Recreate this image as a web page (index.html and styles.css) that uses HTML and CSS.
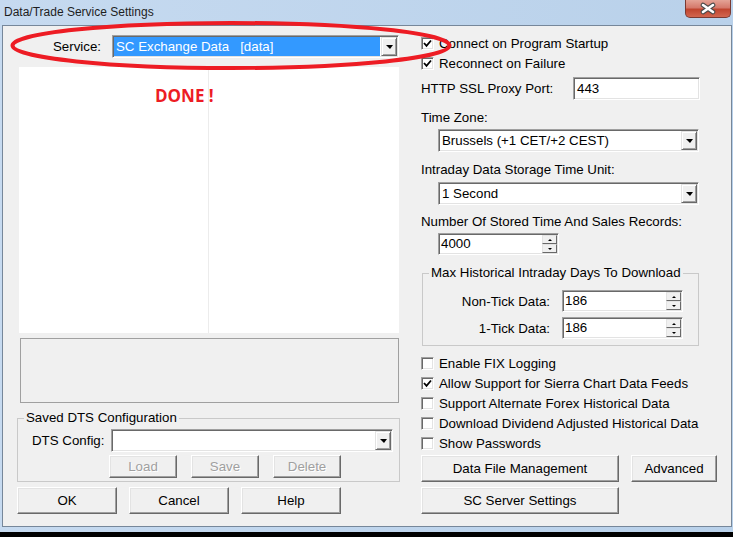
FILE: index.html
```html
<!DOCTYPE html>
<html lang="en">
<head>
    <meta charset="UTF-8">
    <title>Data/Trade Service Settings</title>
    <link rel="stylesheet" href="styles.css">
</head>
<body>
    <div class="window">
        <div class="titlebar">
            <span class="title">Data/Trade Service Settings</span>
            <div class="close-btn">
                <svg width="18" height="13" viewBox="0 0 18 13">
                    <path d="M4 3 L14 10 M14 3 L4 10" stroke="#4a4a4a" stroke-width="4.6" stroke-linecap="round"/>
                    <path d="M4 3 L14 10 M14 3 L4 10" stroke="#fff" stroke-width="2.6" stroke-linecap="round"/>
                </svg>
            </div>
        </div>

        <div class="client">
            <!-- left side: service + list + saved configs -->
            <div class="col-left">
                <div class="service-row">
                    <span class="service-label">Service:</span>
                    <div class="combo service-combo">
                        <span class="combo-text selected">SC Exchange Data&nbsp;&nbsp;&nbsp;[data]</span>
                        <span class="combo-btn"><i class="arrow"></i></span>
                    </div>
                </div>

                <div class="list">
                    <div class="list-col first"><span class="done">DONE !</span></div>
                    <div class="list-col"></div>
                </div>

                <div class="status-box"></div>

                <fieldset class="group dts-group">
                    <legend>Saved DTS Configuration</legend>
                    <div class="dts-row">
                        <span class="dts-label">DTS Config:</span>
                        <div class="combo dts-combo">
                            <span class="combo-text"></span>
                            <span class="combo-btn"><i class="arrow"></i></span>
                        </div>
                    </div>
                    <div class="dts-buttons">
                        <button class="btn small-btn" disabled>Load</button>
                        <button class="btn small-btn" disabled>Save</button>
                        <button class="btn small-btn" disabled>Delete</button>
                    </div>
                </fieldset>

                <div class="dialog-buttons">
                    <button class="btn dlg-btn">OK</button>
                    <button class="btn dlg-btn">Cancel</button>
                    <button class="btn dlg-btn">Help</button>
                </div>
            </div>

            <!-- right side: options -->
            <div class="col-right">
                <div class="check-row">
                    <span class="cb checked"><svg width="9" height="9" viewBox="0 0 9 9"><path d="M1 4 L3.5 6.8 L8 1.5" fill="none" stroke="#000" stroke-width="1.8"/></svg></span>
                    <span>Connect on Program Startup</span>
                </div>
                <div class="check-row">
                    <span class="cb checked"><svg width="9" height="9" viewBox="0 0 9 9"><path d="M1 4 L3.5 6.8 L8 1.5" fill="none" stroke="#000" stroke-width="1.8"/></svg></span>
                    <span>Reconnect on Failure</span>
                </div>

                <div class="proxy-row">
                    <span class="proxy-label">HTTP SSL Proxy Port:</span>
                    <div class="field proxy-field">443</div>
                </div>

                <div class="field-label tz-label">Time Zone:</div>
                <div class="combo wide-combo tz-combo">
                    <span class="combo-text">Brussels (+1 CET/+2 CEST)</span>
                    <span class="combo-btn"><i class="arrow"></i></span>
                </div>

                <div class="field-label unit-label">Intraday Data Storage Time Unit:</div>
                <div class="combo wide-combo unit-combo">
                    <span class="combo-text">1 Second</span>
                    <span class="combo-btn"><i class="arrow"></i></span>
                </div>

                <div class="field-label records-label">Number Of Stored Time And Sales Records:</div>
                <div class="spin records-spin">
                    <span class="spin-text">4000</span>
                    <span class="spin-btns"><span class="spin-up"><i class="tri-up"></i></span><span class="spin-down"><i class="tri-down"></i></span></span>
                </div>

                <fieldset class="group days-group">
                    <legend>Max Historical Intraday Days To Download</legend>
                    <div class="days-row first-days">
                        <span class="days-label">Non-Tick Data:</span>
                        <div class="spin days-spin">
                            <span class="spin-text">186</span>
                            <span class="spin-btns"><span class="spin-up"><i class="tri-up"></i></span><span class="spin-down"><i class="tri-down"></i></span></span>
                        </div>
                    </div>
                    <div class="days-row">
                        <span class="days-label">1-Tick Data:</span>
                        <div class="spin days-spin">
                            <span class="spin-text">186</span>
                            <span class="spin-btns"><span class="spin-up"><i class="tri-up"></i></span><span class="spin-down"><i class="tri-down"></i></span></span>
                        </div>
                    </div>
                </fieldset>

                <div class="options">
                    <div class="check-row"><span class="cb"></span><span>Enable FIX Logging</span></div>
                    <div class="check-row">
                        <span class="cb checked"><svg width="9" height="9" viewBox="0 0 9 9"><path d="M1 4 L3.5 6.8 L8 1.5" fill="none" stroke="#000" stroke-width="1.8"/></svg></span>
                        <span>Allow Support for Sierra Chart Data Feeds</span>
                    </div>
                    <div class="check-row"><span class="cb"></span><span>Support Alternate Forex Historical Data</span></div>
                    <div class="check-row"><span class="cb"></span><span>Download Dividend Adjusted Historical Data</span></div>
                    <div class="check-row"><span class="cb"></span><span>Show Passwords</span></div>
                </div>

                <div class="action-row">
                    <button class="btn big-btn">Data File Management</button>
                    <button class="btn adv-btn">Advanced</button>
                </div>
                <div class="action-row second">
                    <button class="btn big-btn">SC Server Settings</button>
                </div>
            </div>
        </div>

        <!-- red marker drawn over the service selector -->
        <svg class="marker" width="733" height="537" viewBox="0 0 733 537">
            <ellipse cx="231" cy="45.5" rx="218.5" ry="22.5" fill="none" stroke="#ed1c24" stroke-width="4"/>
        </svg>
    </div>
</body>
</html>
```

FILE: styles.css
```css
* {
    box-sizing: border-box;
}

body {
    margin: 0;
    background: #000;
    font-family: 'Liberation Sans', Arial, sans-serif;
    font-size: 13.3px;
    color: #000;
}

.window {
    position: relative;
    width: 733px;
    height: 532px;
    background: linear-gradient(to right, #c6daf0, #b9d1ea);
    padding-left: 2px;
}

.titlebar {
    height: 25px;
    display: flex;
    justify-content: space-between;
    align-items: flex-start;
}

.title {
    font-size: 12px;
    line-height: 25px;
    padding-left: 2px;
    color: #1e1e1e;
}

.close-btn {
    width: 46px;
    height: 18px;
    margin-right: 2px;
    border: 1px solid #7a3a32;
    border-top: none;
    border-radius: 0 0 5px 5px;
    background: linear-gradient(#e4a396 0%, #d5796b 45%, #c0452f 55%, #d2664f 100%);
    display: flex;
    justify-content: center;
    align-items: center;
}

.client {
    width: 730px;
    height: 502px;
    background: #f0f0f0;
    border: 1px solid #76879a;
    display: flex;
    padding-left: 14px;
    gap: 21px;
}

/* ---------- shared controls ---------- */

.combo,
.field,
.spin {
    display: flex;
    height: 23px;
    background: #fff;
    border: 1px solid;
    border-color: #a0a0a0 #fff #fff #a0a0a0;
    box-shadow: inset 1px 1px #696969, inset -1px -1px #e3e3e3;
    padding: 1px;
}

.combo-text {
    flex: 1;
    line-height: 19px;
    padding-left: 2px;
    white-space: nowrap;
    overflow: hidden;
}

.combo-text.selected {
    background: #3399ff;
    color: #fff;
    margin-right: 1px;
}

.combo-btn {
    width: 16px;
    background: #f0f0f0;
    border: 1px solid;
    border-color: #e3e3e3 #696969 #696969 #e3e3e3;
    box-shadow: inset 1px 1px #fff, inset -1px -1px #a0a0a0;
    display: flex;
    justify-content: center;
    align-items: center;
}

.arrow {
    width: 0;
    height: 0;
    border-left: 4px solid transparent;
    border-right: 3px solid transparent;
    border-top: 4px solid #000;
    margin-top: 1px;
}

.spin {
    height: 22px;
}

.spin-text {
    flex: 1;
    line-height: 18px;
    padding-left: 1px;
}

.spin-btns {
    width: 15px;
    display: flex;
    flex-direction: column;
}

.spin-up,
.spin-down {
    flex: 1;
    background: #f0f0f0;
    border: 1px solid;
    border-color: #e3e3e3 #696969 #696969 #e3e3e3;
    display: flex;
    justify-content: center;
    align-items: center;
}

.tri-up {
    border-left: 2px solid transparent;
    border-right: 2px solid transparent;
    border-bottom: 2px solid #000;
}

.tri-down {
    border-left: 2px solid transparent;
    border-right: 2px solid transparent;
    border-top: 2px solid #000;
}

.btn {
    font-family: 'Liberation Sans', Arial, sans-serif;
    font-size: 13.3px;
    color: #000;
    background: #f0f0f0;
    border: 1px solid;
    border-color: #fff #696969 #696969 #fff;
    box-shadow: inset -1px -1px #a0a0a0, inset 1px 1px #e3e3e3;
    padding: 0;
    margin: 0;
}

.btn:disabled {
    color: #a0a0a0;
    text-shadow: 1px 1px #fff;
}

.group {
    margin: 0;
    padding: 0;
    border: 1px solid #c9c9c9;
    min-width: 0;
}

.group legend {
    margin-left: 6px;
    padding: 0 2px;
    line-height: 16px;
}

.check-row {
    height: 20px;
    display: flex;
    align-items: center;
    gap: 5px;
}

.cb {
    width: 13px;
    height: 13px;
    background: #fff;
    border: 1px solid;
    border-color: #a0a0a0 #fff #fff #a0a0a0;
    box-shadow: inset 1px 1px #696969, inset -1px -1px #e3e3e3;
    display: flex;
    justify-content: center;
    align-items: center;
}

/* ---------- left column ---------- */

.col-left {
    width: 383px;
    padding-top: 9px;
    display: flex;
    flex-direction: column;
}

.service-row {
    display: flex;
    align-items: center;
}

.service-label {
    width: 95px;
    text-align: right;
    padding-right: 11px;
}

.service-combo {
    width: 287px;
}

.list {
    margin-top: 9px;
    margin-left: 2px;
    width: 380px;
    height: 266px;
    background: #fff;
    display: grid;
    grid-template-columns: 190px 1fr;
}

.list-col.first {
    border-right: 1px solid #ececec;
    padding: 19px 0 0 136px;
    white-space: nowrap;
}

.done {
    font-family: 'Open Sans', sans-serif;
    font-weight: bold;
    font-size: 17px;
    line-height: 20px;
    color: #ed1c24;
}

.status-box {
    margin-top: 5px;
    margin-left: 3px;
    width: 379px;
    height: 65px;
    border: 1px solid #a0a0a0;
}

.dts-group {
    margin-top: 7px;
    width: 383px;
    padding-bottom: 3px;
}

.dts-row {
    margin-top: 3px;
    display: flex;
    align-items: center;
}

.dts-label {
    width: 93px;
    padding-left: 14px;
}

.dts-combo {
    width: 282px;
}

.dts-buttons {
    margin-top: 3px;
    margin-left: 91px;
    display: flex;
    gap: 14px;
}

.small-btn {
    width: 68px;
    height: 23px;
}

.dialog-buttons {
    margin-top: 5px;
    display: flex;
    gap: 12px;
}

.dlg-btn {
    width: 100px;
    height: 27px;
}

/* ---------- right column ---------- */

.col-right {
    width: 296px;
    padding-top: 7px;
    display: flex;
    flex-direction: column;
}

.proxy-row {
    margin-top: 4px;
    display: flex;
    align-items: center;
}

.proxy-label {
    width: 152px;
}

.proxy-field {
    width: 127px;
    padding-left: 3px;
    line-height: 19px;
}

.field-label {
    line-height: 16px;
}

.tz-label {
    margin-top: 10px;
}

.unit-label {
    margin-top: 10px;
}

.records-label {
    margin-top: 9px;
}

.wide-combo {
    margin-left: 17px;
    width: 261px;
}

.tz-combo {
    margin-top: 3px;
}

.unit-combo {
    margin-top: 4px;
}

.records-spin {
    margin-top: 3px;
    margin-left: 17px;
    width: 121px;
}

.days-group {
    margin-top: 10px;
    margin-left: 1px;
    width: 277px;
    padding-bottom: 6px;
}

.days-row {
    display: flex;
    align-items: center;
    margin-top: 5px;
}

.days-row.first-days {
    margin-top: 9px;
}

.days-label {
    width: 127px;
    text-align: right;
}

.days-spin {
    margin-left: 12px;
    width: 121px;
}

.options {
    margin-top: 7px;
}

.action-row {
    margin-top: 2px;
    display: flex;
    gap: 12px;
}

.action-row.second {
    margin-top: 5px;
}

.big-btn {
    width: 198px;
    height: 27px;
}

.adv-btn {
    width: 86px;
    height: 27px;
}

.marker {
    position: absolute;
    left: 0;
    top: 0;
    pointer-events: none;
}
```
